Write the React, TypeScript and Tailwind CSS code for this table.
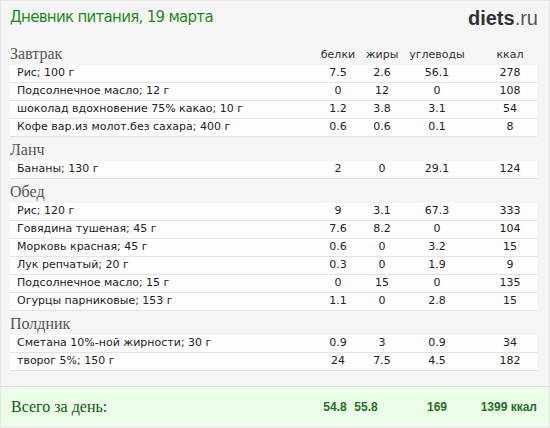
const sections = [
  {
    title: "Завтрак",
    items: [
      ["Рис; 100 г", "7.5", "2.6", "56.1", "278"],
      ["Подсолнечное масло; 12 г", "0", "12", "0", "108"],
      ["шоколад вдохновение 75% какао; 10 г", "1.2", "3.8", "3.1", "54"],
      ["Кофе вар.из молот.без сахара; 400 г", "0.6", "0.6", "0.1", "8"],
    ],
  },
  {
    title: "Ланч",
    items: [["Бананы; 130 г", "2", "0", "29.1", "124"]],
  },
  {
    title: "Обед",
    items: [
      ["Рис; 120 г", "9", "3.1", "67.3", "333"],
      ["Говядина тушеная; 45 г", "7.6", "8.2", "0", "104"],
      ["Морковь красная; 45 г", "0.6", "0", "3.2", "15"],
      ["Лук репчатый; 20 г", "0.3", "0", "1.9", "9"],
      ["Подсолнечное масло; 15 г", "0", "15", "0", "135"],
      ["Огурцы парниковые; 153 г", "1.1", "0", "2.8", "15"],
    ],
  },
  {
    title: "Полдник",
    items: [
      ["Сметана 10%-ной жирности; 30 г", "0.9", "3", "0.9", "34"],
      ["творог 5%; 150 г", "24", "7.5", "4.5", "182"],
    ],
  },
]

const sans = "font-['DejaVu_Sans',Verdana,sans-serif]"
const serif = "font-['Liberation_Serif',Georgia,serif]"

function Cols({ v }: { v: string[] }) {
  return (
    <>
      <div className="w-[44px] text-center">{v[0]}</div>
      <div className="w-[44px] text-center">{v[1]}</div>
      <div className="w-[66px] text-center">{v[2]}</div>
      <div className="w-[67px] pl-[13px] text-center">{v[3]}</div>
    </>
  )
}

export default function App() {
  return (
    <div className="w-[550px] h-[428px] bg-[#f5f5f5] border border-[#e6e6e6] flex flex-col">
      <div className="h-[40px] flex justify-between pl-[9px] pr-[11px] pt-[6px]">
        <div className={`${sans} text-[15px] leading-[20px] text-[#1f8a1f] tracking-[-0.7px]`}>
          Дневник питания, 19 марта
        </div>
        <div className="font-['Liberation_Sans',Arial,sans-serif] text-[20px] leading-[22px] text-[#333]">
          <span className="font-bold">diets</span>
          <span className="text-[#555]">.ru</span>
        </div>
      </div>

      <div className="pl-[9px] pr-[12px]">
        {sections.map((s, si) => (
          <div key={si}>
            <div className="h-[24px] flex items-end pb-[3px]">
              <div className={`${serif} flex-1 text-[16px] leading-[17px] text-[#555]`}>{s.title}</div>
              {si === 0 && (
                <div className={`${sans} flex text-[11px] leading-[14px] text-[#333]`}>
                  <Cols v={["белки", "жиры", "углеводы", "ккал"]} />
                </div>
              )}
            </div>
            {s.items.map((it, i) => (
              <div
                key={i}
                className={`${sans} h-[18px] flex items-center bg-[#fdfdfd] border-b border-[#e3e3e3] text-[11px] text-[#222]`}
              >
                <div className="flex-1 pl-[7px]">{it[0]}</div>
                <Cols v={it.slice(1)} />
              </div>
            ))}
          </div>
        ))}
      </div>

      <div className="mt-auto h-[41px] bg-[#ebfde8] border-t border-[#dcdcdc] flex items-center pl-[10px] pr-[12px]">
        <div className={`${serif} flex-1 text-[16px] text-[#0b5a0b]`}>Всего за день:</div>
        <div className="flex font-['Liberation_Sans',Arial,sans-serif] font-bold text-[12px] text-[#22701f]">
          <div className="w-[40px] text-center">54.8</div>
          <div className="w-[22px] flex justify-center">55.8</div>
          <div className="w-[42px]" />
          <div className="w-[36px] text-center">169</div>
          <div className="w-[82px] text-right">1399 ккал</div>
        </div>
      </div>
    </div>
  )
}
